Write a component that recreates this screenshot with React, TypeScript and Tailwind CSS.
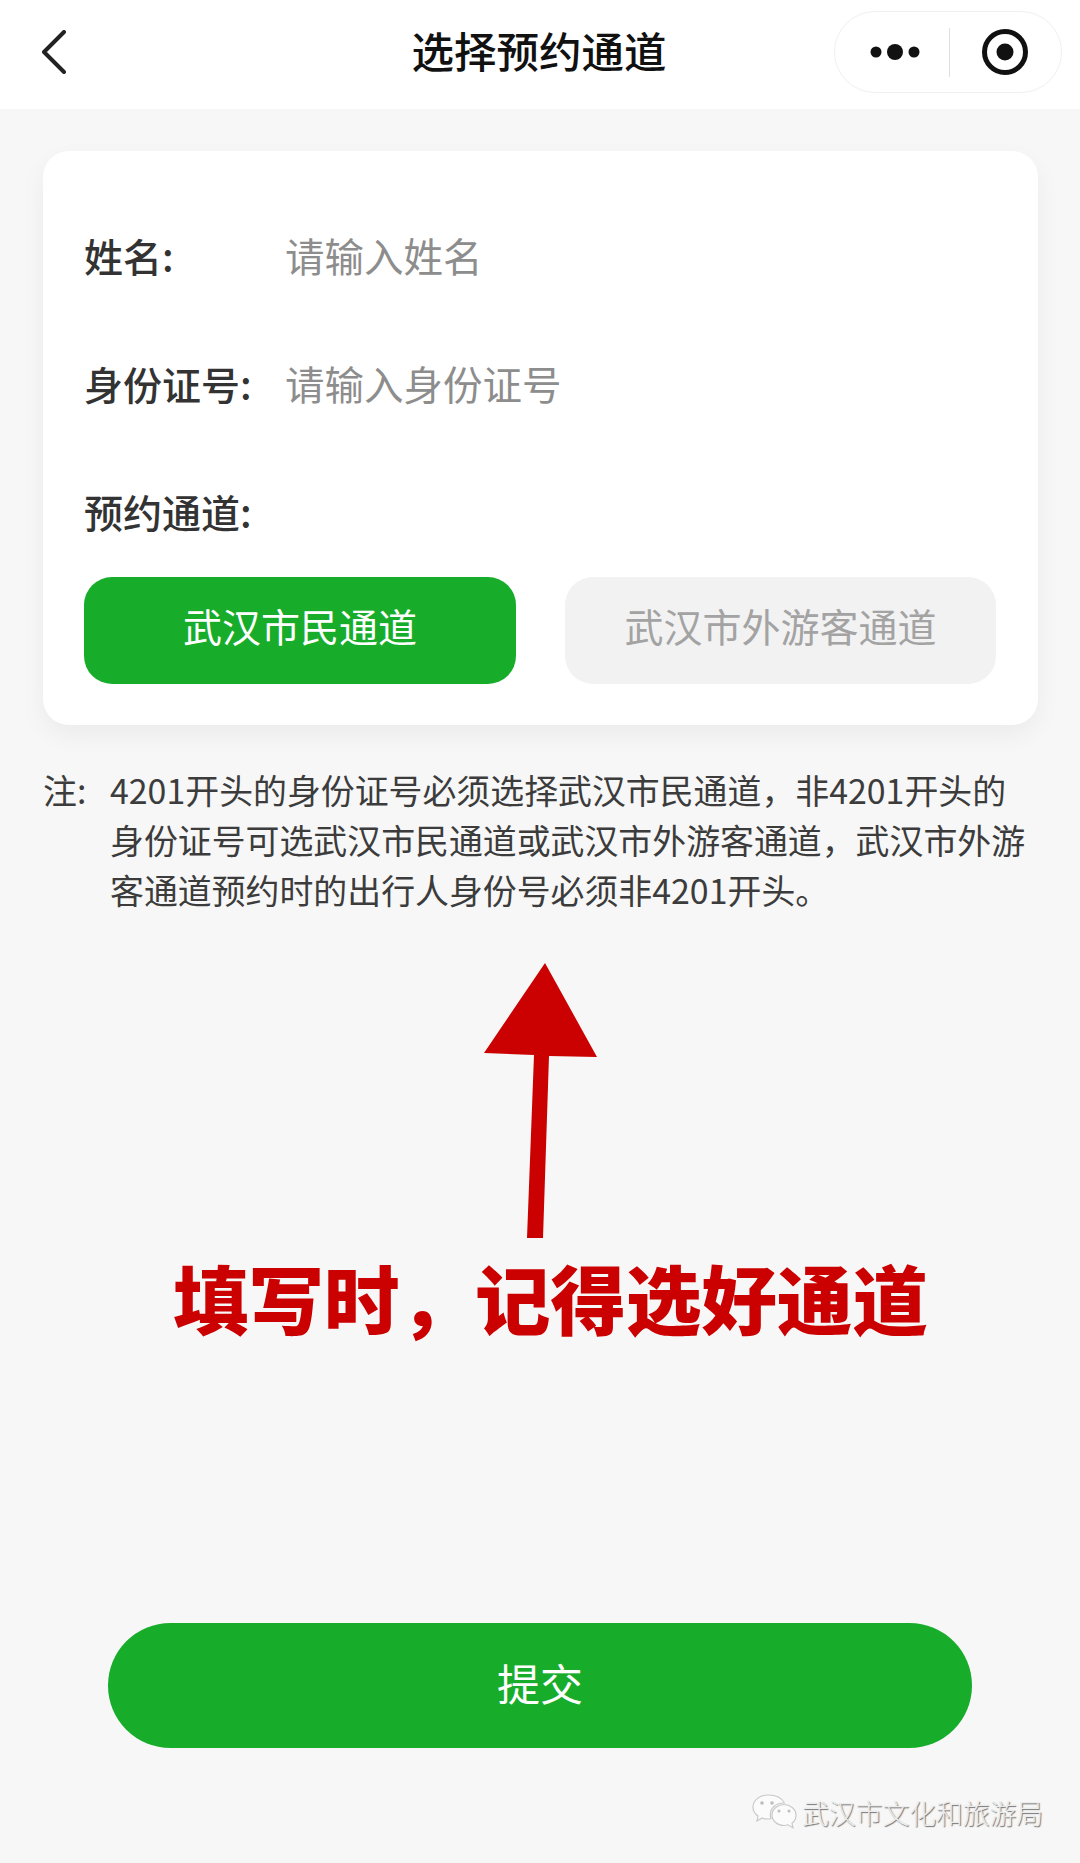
export default function App() {
  const cjk = { fontFamily: '"Noto Sans CJK SC", "Noto Sans", sans-serif' };
  return (
    <div style={cjk} className="flex h-[1863px] w-[1080px] flex-col overflow-hidden bg-[#f7f7f7]">
      <header className="flex h-[109px] shrink-0 items-center bg-white pr-[18px] pb-[5px] pl-[40px]">
        <svg width="28" height="44" viewBox="0 0 28 44" fill="none" stroke="#222" strokeWidth="4" strokeLinecap="round" strokeLinejoin="round">
          <path d="M24 2 L4 22 L24 42" />
        </svg>
        <h1 className="ml-[343px] w-[256px] pb-[4px] text-center text-[42.5px] leading-[60px] font-medium whitespace-nowrap text-[#111]">选择预约通道</h1>
        <div className="ml-auto flex h-[82px] w-[228px] items-center rounded-[41px] border border-[#f0f0f0] bg-white">
          <svg width="114" height="50" viewBox="0 0 114 50" fill="#111" className="shrink-0">
            <circle cx="41" cy="25" r="5.5" />
            <circle cx="60" cy="25" r="8" />
            <circle cx="79" cy="25" r="5.5" />
          </svg>
          <div className="h-[49px] w-px shrink-0 bg-[#dedede]" />
          <svg width="110" height="50" viewBox="0 0 110 50" className="shrink-0">
            <circle cx="55" cy="25" r="20.5" fill="none" stroke="#111" strokeWidth="5" />
            <circle cx="55" cy="25" r="8.5" fill="#111" />
          </svg>
        </div>
      </header>

      <section className="mt-[42px] ml-[43px] h-[574px] w-[995px] shrink-0 rounded-[26px] bg-white pt-[42px] pr-[42px] pl-[41px] shadow-[0_10px_26px_rgba(0,0,0,0.05)]">
        <div className="flex h-[128px] items-center pb-[5px] leading-[56px]">
          <span className="w-[201px] text-[39px] font-medium text-[#333]">姓名:</span>
          <span className="text-[39.5px] text-[#8d8d8d]">请输入姓名</span>
        </div>
        <div className="flex h-[128px] items-center pb-[5px] leading-[56px]">
          <span className="w-[201px] text-[39px] font-medium whitespace-nowrap text-[#333]">身份证号:</span>
          <span className="text-[39.5px] text-[#8d8d8d]">请输入身份证号</span>
        </div>
        <div className="flex h-[128px] items-center pb-[5px] text-[39px] leading-[56px]">
          <span className="font-medium text-[#333]">预约通道:</span>
        </div>
        <div className="flex justify-between">
          <div className="flex h-[107px] w-[432px] items-center justify-center rounded-[28px] bg-[#17ad2b] pb-[10px] text-[39px] text-white">武汉市民通道</div>
          <div className="flex h-[107px] w-[431px] items-center justify-center rounded-[28px] bg-[#f2f2f2] pb-[10px] text-[39px] text-[#a3a3a3]">武汉市外游客通道</div>
        </div>
      </section>

      <div className="mt-[40px] ml-[43px] flex w-[995px] shrink-0 text-[33.9px] leading-[50px] text-[#3c3c3c]">
        <span className="w-[67px] shrink-0">注:</span>
        <p>
          <span className="block whitespace-nowrap">4201开头的身份证号必须选择武汉市民通道，非4201开头的</span>
          <span className="block whitespace-nowrap">身份证号可选武汉市民通道或武汉市外游客通道，武汉市外游</span>
          <span className="block whitespace-nowrap">客通道预约时的出行人身份号必须非4201开头。</span>
        </p>
      </div>

      <svg width="130" height="275" viewBox="0 0 130 275" className="mt-[48px] ml-[476px] shrink-0">
        <polygon fill="#cb0000" points="69,0 8,90 58,92 51,275 67,275 73,93 121,94" />
      </svg>

      <div className="mt-[13px] ml-[173px] shrink-0 text-[75.5px] leading-[90px] font-black whitespace-nowrap text-[#cb0000]">填写时，记得选好通道</div>

      <div className="mx-[108px] mt-[282px] flex h-[125px] w-[864px] shrink-0 items-center justify-center rounded-[63px] bg-[#17ad2b] pb-[6px] text-[43px] text-white">提交</div>

      <div className="mt-[46px] ml-[752px] flex items-center">
        <svg width="45" height="38" viewBox="0 0 45 38" className="shrink-0">
          <path d="M16 1C8 1 1 6 1 13c0 4 2 7 5 9l-1 5 5-3c2 1 4 1 6 1 1 0 2 0 3-.3-.5-1.500-.7-2.700-.7-4 0-7 6-11.700 13-11.700h1C30 4 24 1 16 1z" fill="#fbfbfb" stroke="#c9c9c9" strokeWidth="1.200" />
          <path d="M44 21c0-6-6-10.500-12-10.500S20 15 20 21s5.500 10.500 12 10.500c1.500 0 3-.3 4-.7l5 3-1-4.500c2.500-2 4-4.800 4-7.800z" fill="#fbfbfb" stroke="#c9c9c9" strokeWidth="1.200" />
          <circle cx="10" cy="9" r="1.800" fill="#bdbdbd" />
          <circle cx="20" cy="9" r="1.800" fill="#bdbdbd" />
          <circle cx="27" cy="17" r="1.500" fill="#bdbdbd" />
          <circle cx="37" cy="17" r="1.500" fill="#bdbdbd" />
        </svg>
        <span className="ml-[5px] text-[26.8px] leading-[36px] font-light whitespace-nowrap text-[#ececec] [text-shadow:1px_1px_1px_#6f6f6f]">武汉市文化和旅游局</span>
      </div>
    </div>
  );
}
